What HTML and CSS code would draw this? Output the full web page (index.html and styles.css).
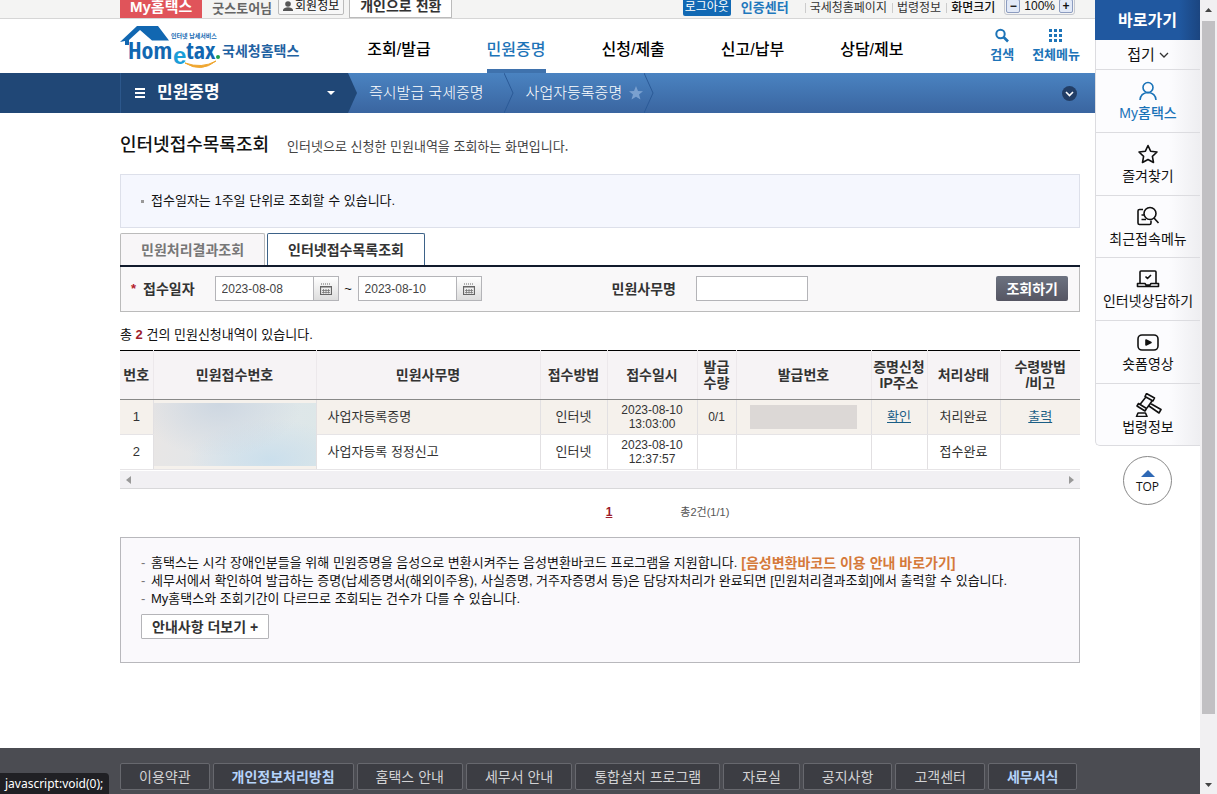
FILE: index.html
```html
<!DOCTYPE html>
<html lang="ko">
<head>
<meta charset="utf-8">
<title>인터넷접수목록조회 - 국세청홈택스</title>
<link rel="stylesheet" href="styles.css">
</head>
<body>
<div class="page">
  <div class="topbar">
    <div class="wrap topbar-row">
      <a class="my" href="#">My홈택스</a>
      <span class="user">굿스토어님</span>
      <button class="member" type="button"><svg width="10" height="10" viewBox="0 0 10 10"><circle cx="5" cy="3" r="2.8"/><path d="M0 10V8.500Q1 6.500 5 6.200Q9 6.500 10 8.500V10Z"/></svg>회원정보</button>
      <button class="switch" type="button">개인으로 전환</button>
      <div class="util">
        <button class="logout" type="button">로그아웃</button>
        <a class="cert" href="#">인증센터</a>
        <a class="bar-left" href="#">국세청홈페이지</a>
        <a class="bar-left" href="#">법령정보</a>
        <span class="bar-left strong">화면크기</span>
        <span class="zoom"><button type="button" aria-label="축소">−</button>100%<button type="button" aria-label="확대">+</button></span>
      </div>
    </div>
  </div>

  <header class="wrap header">
    <a class="logo" href="#" aria-label="국세청홈택스">
      <svg width="102" height="46" viewBox="0 0 102 46">
        <path class="roof" d="M0 19L17 3H38L49 17.500H32L20 7L9 17V22H5V18Z"/>
        <text class="logo-sub" x="51" y="15">인터넷 납세서비스</text>
        <text class="logo-en" x="8" y="36">Hom</text>
        <text class="logo-e" x="53" y="41">e</text>
        <text class="logo-en" x="66" y="36">tax</text>
        <circle class="dot" cx="98" cy="34" r="2"/>
        <path class="smile" d="M65 40Q81 50 96 38Q82 46 65 40Z"/>
      </svg>
      <span class="logo-ko">국세청홈택스</span>
    </a>
    <nav class="gnb">
      <a href="#">조회/발급</a>
      <a class="on" href="#">민원증명</a>
      <a href="#">신청/제출</a>
      <a href="#">신고/납부</a>
      <a href="#">상담/제보</a>
    </nav>
    <div class="tools">
      <a href="#"><svg width="16" height="16" viewBox="0 0 16 16"><circle cx="6.500" cy="6" r="4.200" fill="none" stroke="currentColor" stroke-width="2"/><path d="M9.500 9L14 13.500" stroke="currentColor" stroke-width="2.600"/></svg>검색</a>
      <a href="#"><svg width="16" height="16" viewBox="0 0 16 16" fill="currentColor"><path d="M1 1h3v3H1zM6 1h3v3H6zM11 1h3v3h-3zM1 6h3v3H1zM6 6h3v3H6zM11 6h3v3h-3zM1 11h3v3H1zM6 11h3v3H6zM11 11h3v3h-3z"/></svg>전체메뉴</a>
    </div>
  </header>

  <div class="locbar">
    <div class="loc-side"></div>
    <div class="loc">
      <button class="loc-menu" type="button">
        <svg width="12" height="12" viewBox="0 0 12 12"><path d="M1 2H11M1 6H11M1 10H11" stroke="#fff" stroke-width="2"/></svg>
        <span>민원증명</span>
        <svg width="8" height="4" viewBox="0 0 8 4"><path d="M0 0H8L4 4Z" fill="#fff"/></svg>
      </button>
      <svg class="tip" width="9" height="40" viewBox="0 0 9 40"><path d="M0 0L9 20L0 40Z" fill="#204776"/></svg>
      <a class="crumb" href="#">즉시발급 국세증명</a>
      <svg class="chev" width="10" height="40" viewBox="0 0 10 40"><path d="M0 0L9 20L0 40"/></svg>
      <a class="crumb" href="#">사업자등록증명</a>
      <svg class="star" width="14" height="14" viewBox="0 0 14 14"><path d="M7 0L9 5L14 5.200L10 8.500L11.500 13.500L7 10.700L2.500 13.500L4 8.500L0 5.200L5 5Z"/></svg>
      <svg class="chev" width="10" height="40" viewBox="0 0 10 40"><path d="M0 0L9 20L0 40"/></svg>
      <button class="expand" type="button" aria-label="펼치기"><svg width="15" height="15" viewBox="0 0 15 15"><circle cx="7.500" cy="7.500" r="7.500" fill="#223e66"/><path d="M4 6L7.500 9.500L11 6" fill="none" stroke="#fff" stroke-width="1.600"/></svg></button>
    </div>
  </div>

  <main class="wrap main">
    <div class="title"><h1>인터넷접수목록조회</h1><p>인터넷으로 신청한 민원내역을 조회하는 화면입니다.</p></div>
    <ul class="info"><li>접수일자는 1주일 단위로 조회할 수 있습니다.</li></ul>
    <div class="tabs">
      <button type="button">민원처리결과조회</button>
      <button class="on" type="button">인터넷접수목록조회</button>
    </div>
    <form class="search">
      <span class="req">*</span>
      <label class="date-label" for="from">접수일자</label>
      <input id="from" type="text" value="2023-08-08">
      <button class="cal" type="button" aria-label="시작일 선택"><svg width="12" height="12" viewBox="0 0 12 12"><path d="M1 1H11" stroke="#666" stroke-dasharray="1 1"/><path d="M.5 3.500H11.500V11.500H.5ZM.5 4H11.500" fill="none" stroke="#666" stroke-width="1.200"/><path d="M2 7.500H10M2 9.500H10M3.500 6V10.500M6 6V10.500M8.500 6V10.500" stroke="#777" stroke-width=".8"/></svg></button>
      <span class="tilde">~</span>
      <input id="to" type="text" value="2023-08-10" aria-label="종료일">
      <button class="cal" type="button" aria-label="종료일 선택"><svg width="12" height="12" viewBox="0 0 12 12"><path d="M1 1H11" stroke="#666" stroke-dasharray="1 1"/><path d="M.5 3.500H11.500V11.500H.5ZM.5 4H11.500" fill="none" stroke="#666" stroke-width="1.200"/><path d="M2 7.500H10M2 9.500H10M3.500 6V10.500M6 6V10.500M8.500 6V10.500" stroke="#777" stroke-width=".8"/></svg></button>
      <label class="name-label" for="name">민원사무명</label>
      <input id="name" class="wide" type="text">
      <button class="go" type="button">조회하기</button>
    </form>

    <p class="count">총 <b>2</b> 건의 민원신청내역이 있습니다.</p>
    <table class="list">
      <colgroup><col class="c-no"><col class="c-rcpt"><col class="c-name"><col class="c-way"><col class="c-time"><col class="c-qty"><col class="c-issue"><col class="c-ip"><col class="c-state"><col class="c-recv"></colgroup>
      <thead>
        <tr><th>번호</th><th>민원접수번호</th><th>민원사무명</th><th>접수방법</th><th>접수일시</th><th>발급<br>수량</th><th>발급번호</th><th>증명신청<br>IP주소</th><th>처리상태</th><th>수령방법<br>/비고</th></tr>
      </thead>
      <tbody>
        <tr class="sel"><td>1</td><td class="masked" rowspan="2"><div class="haze"></div></td><td class="left">사업자등록증명</td><td>인터넷</td><td class="num">2023-08-10<br>13:03:00</td><td class="num">0/1</td><td><div class="mask"></div></td><td><a href="#">확인</a></td><td>처리완료</td><td><a href="#">출력</a></td></tr>
        <tr><td>2</td><td class="left">사업자등록 정정신고</td><td>인터넷</td><td class="num">2023-08-10<br>12:37:57</td><td></td><td></td><td></td><td>접수완료</td><td></td></tr>
      </tbody>
    </table>
    <div class="hscroll">
      <svg width="5" height="8" viewBox="0 0 5 8"><path d="M5 0V8L0 4Z"/></svg>
      <svg width="5" height="8" viewBox="0 0 5 8"><path d="M0 0V8L5 4Z"/></svg>
    </div>
    <div class="pager"><span></span><a href="#">1</a><span class="total">총2건(1/1)</span></div>

    <section class="notice">
      <ul>
        <li>홈택스는 시각 장애인분들을 위해 민원증명을 음성으로 변환시켜주는 음성변환바코드 프로그램을 지원합니다.<a href="#">[음성변환바코드 이용 안내 바로가기]</a></li>
        <li>세무서에서 확인하여 발급하는 증명(납세증명서(해외이주용), 사실증명, 거주자증명서 등)은 담당자처리가 완료되면 [민원처리결과조회]에서 출력할 수 있습니다.</li>
        <li>My홈택스와 조회기간이 다르므로 조회되는 건수가 다를 수 있습니다.</li>
      </ul>
      <button type="button">안내사항 더보기 +</button>
    </section>
  </main>

  <footer class="footer">
    <div class="wrap foot-links">
      <a href="#">이용약관</a><a class="hl" href="#">개인정보처리방침</a><a href="#">홈택스 안내</a><a href="#">세무서 안내</a><a href="#">통합설치 프로그램</a><a href="#">자료실</a><a href="#">공지사항</a><a href="#">고객센터</a><a class="hl" href="#">세무서식</a>
    </div>
  </footer>

  <aside class="quick">
    <h2>바로가기</h2>
    <div class="quick-list">
      <button class="fold" type="button">접기 <svg width="10" height="10" viewBox="0 0 10 10"><path d="M1 3L5 7L9 3" fill="none" stroke="#333" stroke-width="1.300"/></svg></button>
      <a class="me" href="#"><svg width="24" height="24" viewBox="0 0 24 24"><circle cx="12" cy="8.500" r="5"/><path d="M4 21Q4.500 14 12 13.500Q19.500 14 20 21"/></svg>My홈택스</a>
      <a href="#"><svg width="24" height="24" viewBox="0 0 24 24"><path d="M12 3.500L14.600 9.200L21 10L16.400 14.300L17.500 20.500L12 17.500L6.500 20.500L7.600 14.300L3 10L9.400 9.200Z"/></svg>즐겨찾기</a>
      <a href="#"><svg width="24" height="24" viewBox="0 0 24 24"><path d="M7 4.500H3.500Q2 4.500 2 6V18Q2 19.500 3.500 19.500H13.500Q15 19.500 15 18V15.500M5.500 10H8M5.500 14.500H10"/><circle cx="14" cy="8.500" r="6"/><path d="M18 13L22.500 18"/></svg>최근접속메뉴</a>
      <a href="#"><svg width="24" height="24" viewBox="0 0 24 24"><path d="M4 16V5Q4 4 5 4H19Q20 4 20 5V16M9.500 9.500L11.500 11.500L15 8M1.500 16.500H9L10 18H14L15 16.500H22.500V19.500H1.500Z"/></svg>인터넷상담하기</a>
      <a href="#"><svg width="24" height="24" viewBox="0 0 24 24"><rect x="2" y="5" width="20" height="15" rx="4"/><path d="M10 10L15 12.500L10 15Z" fill="#111"/></svg>숏폼영상</a>
      <a href="#"><svg width="28" height="24" viewBox="0 0 28 24"><path d="M12.500 0.500L20.500 5L19 8L11 3.500ZM4.500 10.500L12.500 15.500L11 18L3 13ZM11.500 4.500L6 11.500M18 8L13 15M16.500 10.500L27 16.500L25 20L15 13M4 20H11.500L13 23.500H2.500Z"/></svg>법령정보</a>
    </div>
    <a class="top" href="#"><svg width="14" height="7" viewBox="0 0 14 7"><path d="M7 0L14 7H0Z" fill="#2f69b5"/></svg>TOP</a>
  </aside>
  <div class="status">javascript:void(0);</div>
</div>
<div class="vscroll">
  <svg width="7" height="4" viewBox="0 0 7 4"><path d="M3.500 0L7 4H0Z"/></svg>
  <div class="track"><div class="thumb"></div></div>
  <svg width="7" height="4" viewBox="0 0 7 4"><path d="M0 0H7L3.500 4Z"/></svg>
</div>
</body>
</html>
```

FILE: styles.css
```css
* { box-sizing: border-box; }
body { margin: 0; display: flex; min-height: 100vh; background: #fff; color: #111; font: 13px/18px "Liberation Sans", "Noto Sans CJK KR", sans-serif; }
a { color: inherit; text-decoration: none; }
button, input { font: inherit; color: inherit; margin: 0; padding: 0; border: 0; background: none; border-radius: 0; }
h1, h2, p, ul { margin: 0; padding: 0; }
ul { list-style: none; }
svg { display: block; flex: none; }
.page { position: relative; flex: 1; min-width: 0; display: flex; flex-direction: column; overflow: hidden; }
.wrap { width: 100%; max-width: 960px; margin: 0 auto; }

/* top utility bar */
.topbar { background: #f4f4f3; border-bottom: 1px solid #d6d6d6; }
.topbar-row { display: flex; align-items: flex-end; height: 18px; overflow: hidden; white-space: nowrap; font-size: 12px; }
.my { background: #e0545a; color: #fff; font-size: 15px; font-weight: bold; line-height: 22px; padding: 0 10px; }
.user { color: #666; font-size: 13px; font-weight: bold; margin: 0 6px 0 10px; }
.member { display: flex; align-items: center; gap: 2px; height: 18px; padding: 0 4px; margin-bottom: 3px; border: 1px solid #bbb; border-radius: 2px; background: #f7f7f7; }
.member svg { fill: #555; }
.switch { height: 24px; padding: 0 10px; margin-left: 5px; background: #fff; border: 1px solid #bbb; font-size: 14px; font-weight: bold; color: #333; line-height: 22px; }
.util { display: flex; align-items: flex-end; margin-left: auto; margin-right: 5px; line-height: 20px; }
.logout { background: #1169b4; color: #fff; height: 18px; line-height: 18px; padding: 0 2px; margin-bottom: 2px; border-radius: 2px; }
.cert { color: #1f78bd; font-size: 13px; font-weight: bold; margin: 0 16px 0 10px; }
.bar-left { position: relative; padding: 0 5px; color: #333; }
.bar-left::before { content: ""; position: absolute; left: 0; top: 5px; height: 10px; border-left: 1px solid #ccc; }
.strong { font-weight: 500; color: #111; }
.zoom { display: flex; align-items: center; gap: 4px; margin: 0 0 3px 4px; padding: 0 1px; border: 1px solid #c5c8d0; border-radius: 3px; line-height: 16px; }
.zoom button { width: 14px; height: 14px; border: 1px solid #8c9cc0; border-radius: 2px; background: #e2e9f7; line-height: 12px; font-weight: bold; }

/* header */
.header { display: flex; height: 54px; }
.logo { display: flex; margin-top: 4px; }
.roof, .logo-en, .logo-sub { fill: #1167b1; }
.logo-en { font: bold 24px "Liberation Sans Narrow", "Open Sans Condensed", "Liberation Sans", sans-serif; }
.logo-e { font: bold 24px "Liberation Sans Narrow", "Liberation Sans", sans-serif; fill: #1a9ed8; }
.logo-sub { font: bold 6px "Noto Sans CJK KR", sans-serif; }
.dot { fill: #1fa04a; }
.smile { fill: #efa62f; stroke: #efa62f; }
.logo-ko { color: #1f62a2; font-size: 14px; font-weight: bold; margin-top: 18px; line-height: 20px; }
.gnb { display: flex; gap: 56px; margin-left: 68px; font-size: 16px; font-weight: 500; line-height: 50px; padding-top: 4px; white-space: nowrap; }
.gnb a { padding-top: 2px; color: #000; }
.gnb .on { color: #1d74b8; border-bottom: 4px solid #3f72ad; line-height: 50px; }
.tools { display: flex; gap: 18px; margin-left: auto; color: #1d74b8; font-weight: bold; }
.tools a { display: flex; flex-direction: column; align-items: center; gap: 2px; padding-top: 9px; }

/* location bar */
.locbar { display: grid; grid-template-columns: minmax(0, 1fr) minmax(0, 960px) minmax(0, 1fr); background: linear-gradient(#4a83c1, #3a65a0); }
.loc-side { background: #204776; }
.loc { display: flex; align-items: center; height: 40px; color: #fff; white-space: nowrap; }
.loc-menu { display: flex; align-items: center; gap: 11px; width: 228px; height: 40px; padding: 0 13px; border-left: 1px solid #2c578b; background: #204776; font-size: 17px; font-weight: bold; }
.loc-menu svg:last-child { margin-left: auto; }
.crumb { font-size: 15px; font-weight: 300; margin: 0 10px 0 12px; }
.chev { margin-left: 10px; fill: none; stroke: #2b5a97; }
.star { fill: #7aa0cf; margin-left: -3px; }
.star + .chev { margin-left: 1px; }
.expand { margin: 0 3px 0 auto; }

/* page body */
.main { flex: 1; padding: 18px 0 85px; }
.title { display: flex; align-items: baseline; gap: 18px; margin-bottom: 14px; line-height: 28px; }
.title h1 { font-size: 18px; font-weight: 500; }
.title p { color: #444; font-family: "Noto Sans CJK KR", sans-serif; }
.info { padding: 17px 20px; border: 1px solid #dde0ea; background: #f5f7fe; margin-bottom: 5px; }
.info li { display: flex; align-items: center; gap: 7px; }
.info li::before { content: ""; width: 3px; height: 3px; background: #999; }
.tabs { display: flex; gap: 2px; border-bottom: 2px solid #111a2c; }
.tabs button { height: 32px; padding: 0 20px; border: 1px solid #bbb; border-bottom: 0; border-radius: 2px 2px 0 0; background: #f8f6f8; color: #777; font-size: 14px; font-weight: bold; }
.tabs .on { border-color: #3d6288; background: #fff; color: #333; }
.search { display: flex; align-items: center; padding: 9px 11px 10px 10px; border: 1px solid #bbb; border-top: 0; background: #f9f8f9; }
.search label { font-size: 14px; font-weight: bold; color: #333; }
.req { color: #b3202b; font-weight: bold; width: 12px; }
.date-label { margin-right: 20px; }
.search input { width: 99px; height: 25px; padding: 0 6px; border: 1px solid #b4b4b8; background: #fff; font-size: 12px; color: #444; }
.search .wide { width: 112px; }
.cal { display: grid; place-items: center; width: 25px; height: 25px; border: 1px solid #b4b4b8; border-left: 0; background: linear-gradient(#fff, #ddd); }
.tilde { width: 19px; text-align: center; }
.name-label { margin: 0 20px 0 130px; }
.search .go { margin-left: auto; height: 25px; padding: 0 10px; border-radius: 2px; background: linear-gradient(#6c7280, #565663); color: #fff; font-size: 14px; font-weight: bold; }
.count { margin: 14px 0 6px; }
.count b { color: #9d1c2c; }

/* result list */
.list { width: 100%; table-layout: fixed; border-collapse: collapse; border-top: 1px solid #000; text-align: center; color: #333; }
.c-no { width: 33px; } .c-rcpt { width: 163px; } .c-name { width: 224px; } .c-way { width: 67px; } .c-time { width: 90px; }
.c-qty { width: 39px; } .c-issue { width: 135px; } .c-ip { width: 56px; } .c-state { width: 73px; }
.list th { height: 49px; padding: 0; background: #f6f3f5; border-right: 1px solid #ece8eb; border-bottom: 1px solid #888; font-size: 14px; line-height: 16px; white-space: nowrap; }
.list td { height: 35px; padding: 0; border-right: 1px solid #e2e0e2; border-bottom: 1px solid #e6e4e6; }
.list tr > :last-child { border-right: 0; }
.sel { background: #f5f1ec; }
.list .left { text-align: left; padding-left: 11px; }
.list .num { font-size: 12px; line-height: 14px; }
.list td a { color: #1a5e86; text-decoration: underline; }
.haze { height: 63px; background: radial-gradient(ellipse at 40% 0, rgba(203,213,224,.9), transparent 60%), radial-gradient(ellipse at 72% 90%, #cbdfec, transparent 50%), linear-gradient(100deg, #e9e6e5, #e0e6ea 50%, #dde7e8); }
.mask { width: 107px; height: 24px; margin: 0 auto; background: #dcd8d6; }
.hscroll { display: flex; justify-content: space-between; align-items: center; height: 18px; margin-top: 1px; padding: 0 6px; background: #f1f0f3; border-bottom: 1px solid #d8d8da; fill: #999; }
.pager { display: grid; grid-template-columns: 1fr auto 1fr; margin: 14px 0 16px 18px; font-size: 12px; }
.pager a { color: #9d1c2c; font-weight: bold; text-decoration: underline; }
.total { padding-left: 68px; color: #555; font-size: 11px; }
.notice { padding: 16px 20px 23px; border: 1px solid #b8b8bc; background: #faf9fc; }
.notice li { display: flex; gap: 4px; white-space: nowrap; }
.notice li::before { content: "-"; width: 6px; color: #777; }
.notice li a { color: #d5793a; font-size: 14px; font-weight: bold; }
.notice button { height: 25px; margin-top: 6px; padding: 0 10px; border: 1px solid #b4b4b8; border-radius: 1px; background: #fff; color: #333; font-size: 14px; font-weight: bold; }

/* footer */
.footer { background: #4b4c52; padding: 15px 0 4px; }
.foot-links { display: flex; gap: 3px; white-space: nowrap; font-family: "Noto Sans CJK KR", sans-serif; }
.foot-links a { padding: 0 18px; border: 1px solid #67686e; border-radius: 2px; background: #3c3d43; color: #d2d2d4; font-size: 14px; line-height: 25px; }
.foot-links .hl { color: #b5d3fa; font-weight: bold; }

/* quick menu floating over the right edge */
.quick { position: absolute; top: 0; right: 0; width: 105px; }
.quick h2 { height: 40px; line-height: 42px; text-align: center; color: #fff; font-size: 16px; background: linear-gradient(90deg, #2058a0 80%, #1b4580); }
.quick-list { border: 1px solid #dcdce0; border-width: 0 0 1px 1px; border-radius: 0 0 0 5px; background: linear-gradient(90deg, #fcfcfe 70%, #eeeef1); overflow: hidden; }
.quick-list > * { display: flex; flex-direction: column; align-items: center; width: 100%; height: 63px; padding-top: 9px; font-size: 14px; line-height: 20px; border-top: 1px solid #dcdce0; white-space: nowrap; }
.quick-list > :nth-child(3n+1) { height: 62px; }
.quick-list > .fold { flex-direction: row; justify-content: center; gap: 4px; height: 29px; padding: 0; border: 0; font-size: 15px; }
.quick-list a svg { fill: none; stroke: #111; stroke-width: 1.6; stroke-linejoin: round; }
.quick-list .me { color: #1a73b8; font-weight: 500; }
.quick-list .me svg { stroke: #1a73b8; }
.top { display: flex; flex-direction: column; align-items: center; gap: 1px; width: 49px; height: 49px; margin: 10px auto 0; padding-top: 13px; border: 1px solid #888; border-radius: 50%; background: #fff; font-family: "Open Sans", sans-serif; font-size: 12px; line-height: 18px; }
.status { position: absolute; left: 0; bottom: 0; padding: 2px 6px 1px 5px; background: #202024; color: #fff; border-radius: 0 4px 0 0; font: 12px/18px "Noto Sans", sans-serif; }

/* window scroll bar */
.vscroll { display: flex; flex-direction: column; align-items: center; justify-content: space-between; gap: 9px; width: 17px; padding: 8px 0 7px; background: #f1f0f2; fill: #444; }
.track { flex: 1; }
.thumb { width: 13px; height: 92%; background: #c1c0c3; }
```
